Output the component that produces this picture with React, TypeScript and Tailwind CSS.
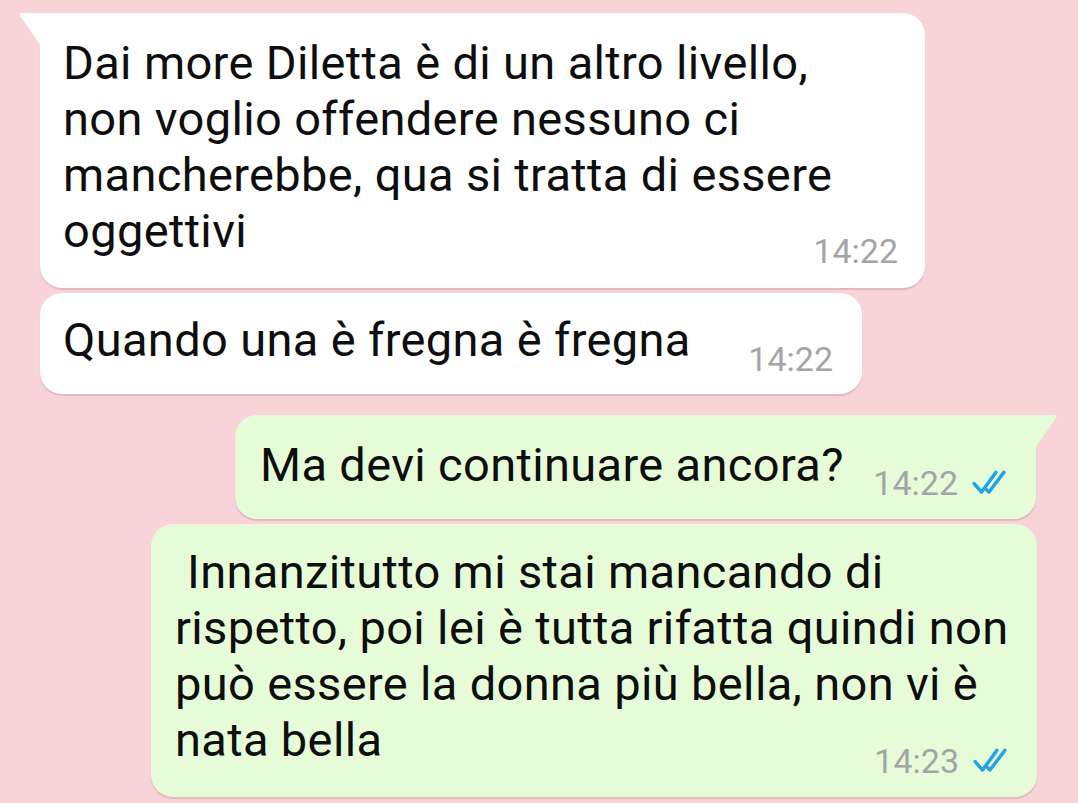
import React from "react";

const font = { fontFamily: "Roboto, 'Noto Sans', sans-serif" };

const Ticks = () => (
  <svg width="34" height="28" viewBox="0 0 32 26" fill="none" className="text-[#22a3e4] shrink-0">
    <path d="M2 13.5 L9 21.5 L22.5 3" stroke="currentColor" strokeWidth="3.2" strokeLinecap="round" strokeLinejoin="round" />
    <path d="M13.5 19 L16 21.5 L30 3" stroke="currentColor" strokeWidth="3.2" strokeLinecap="round" strokeLinejoin="round" />
  </svg>
);

const TailLeft = ({ color }: { color: string }) => (
  <svg className="absolute top-0 left-[-22px]" width="23" height="34" viewBox="0 0 23 34">
    <path d="M23 0 L4 0 Q0 0 2 3 L23 33 Z" fill={color} />
  </svg>
);

const TailRight = ({ color }: { color: string }) => (
  <svg className="absolute top-0 right-[-22px]" width="23" height="34" viewBox="0 0 23 34">
    <path d="M0 0 L19 0 Q23 0 21 3 L0 33 Z" fill={color} />
  </svg>
);

const Time = ({ t, read }: { t: string; read?: boolean }) => (
  <div className="flex items-center gap-[14px]">
    <span className="text-[34px] leading-[40px] text-[#a2a5a7]">{t}</span>
    {read && <Ticks />}
  </div>
);

const msg = "text-[47px] leading-[56px] tracking-[0.35px] whitespace-pre";

export default function App() {
  return (
    <div className="w-[1078px] h-[803px] overflow-hidden bg-[#f8d3d8] flex flex-col text-[#0e0e0e]" style={font}>
      {/* incoming 1 */}
      <div className="relative ml-[40px] mt-[13px] w-[885px] bg-white rounded-[22px] rounded-tl-none shadow-[0_2px_1px_rgba(120,60,70,0.18)] pl-[23px] pr-[27px] pt-[22px] pb-[17px]">
        <TailLeft color="#ffffff" />
        <p className={msg}>
          Dai more Diletta è di un altro livello,<br />
          non voglio offendere nessuno ci<br />
          mancherebbe, qua si tratta di essere<br />
          oggettivi
        </p>
        <div className="flex justify-end mt-[-28px]">
          <Time t="14:22" />
        </div>
      </div>

      {/* incoming 2 */}
      <div className="ml-[40px] mt-[5px] w-[822px] bg-white rounded-[22px] shadow-[0_2px_1px_rgba(120,60,70,0.18)] pl-[23px] pr-[29px] pt-[19px] pb-[15px] flex justify-between items-start">
        <p className={msg}>Quando una è fregna è fregna</p>
        <div className="mt-[27px]">
          <Time t="14:22" />
        </div>
      </div>

      {/* outgoing 1 */}
      <div className="relative ml-[235px] mt-[21px] w-[801px] bg-[#e6fcd8] rounded-[22px] rounded-tr-none shadow-[0_2px_1px_rgba(120,60,70,0.18)] pl-[25px] pr-[30px] pt-[22px] pb-[16px] flex justify-between items-start">
        <TailRight color="#e6fcd8" />
        <p className={msg}>Ma devi continuare ancora?</p>
        <div className="mt-[26px]">
          <Time t="14:22" read />
        </div>
      </div>

      {/* outgoing 2 */}
      <div className="ml-[151px] mt-[5px] w-[886px] bg-[#e6fcd8] rounded-[22px] shadow-[0_2px_1px_rgba(120,60,70,0.18)] pl-[24px] pr-[30px] pt-[20px] pb-[16px]">
        <p className={msg}>
          {" Innanzitutto mi stai mancando di"}<br />
          rispetto, poi lei è tutta rifatta quindi non<br />
          può essere la donna più bella, non vi è<br />
          nata bella
        </p>
        <div className="flex justify-end mt-[-27px]">
          <Time t="14:23" read />
        </div>
      </div>
    </div>
  );
}
